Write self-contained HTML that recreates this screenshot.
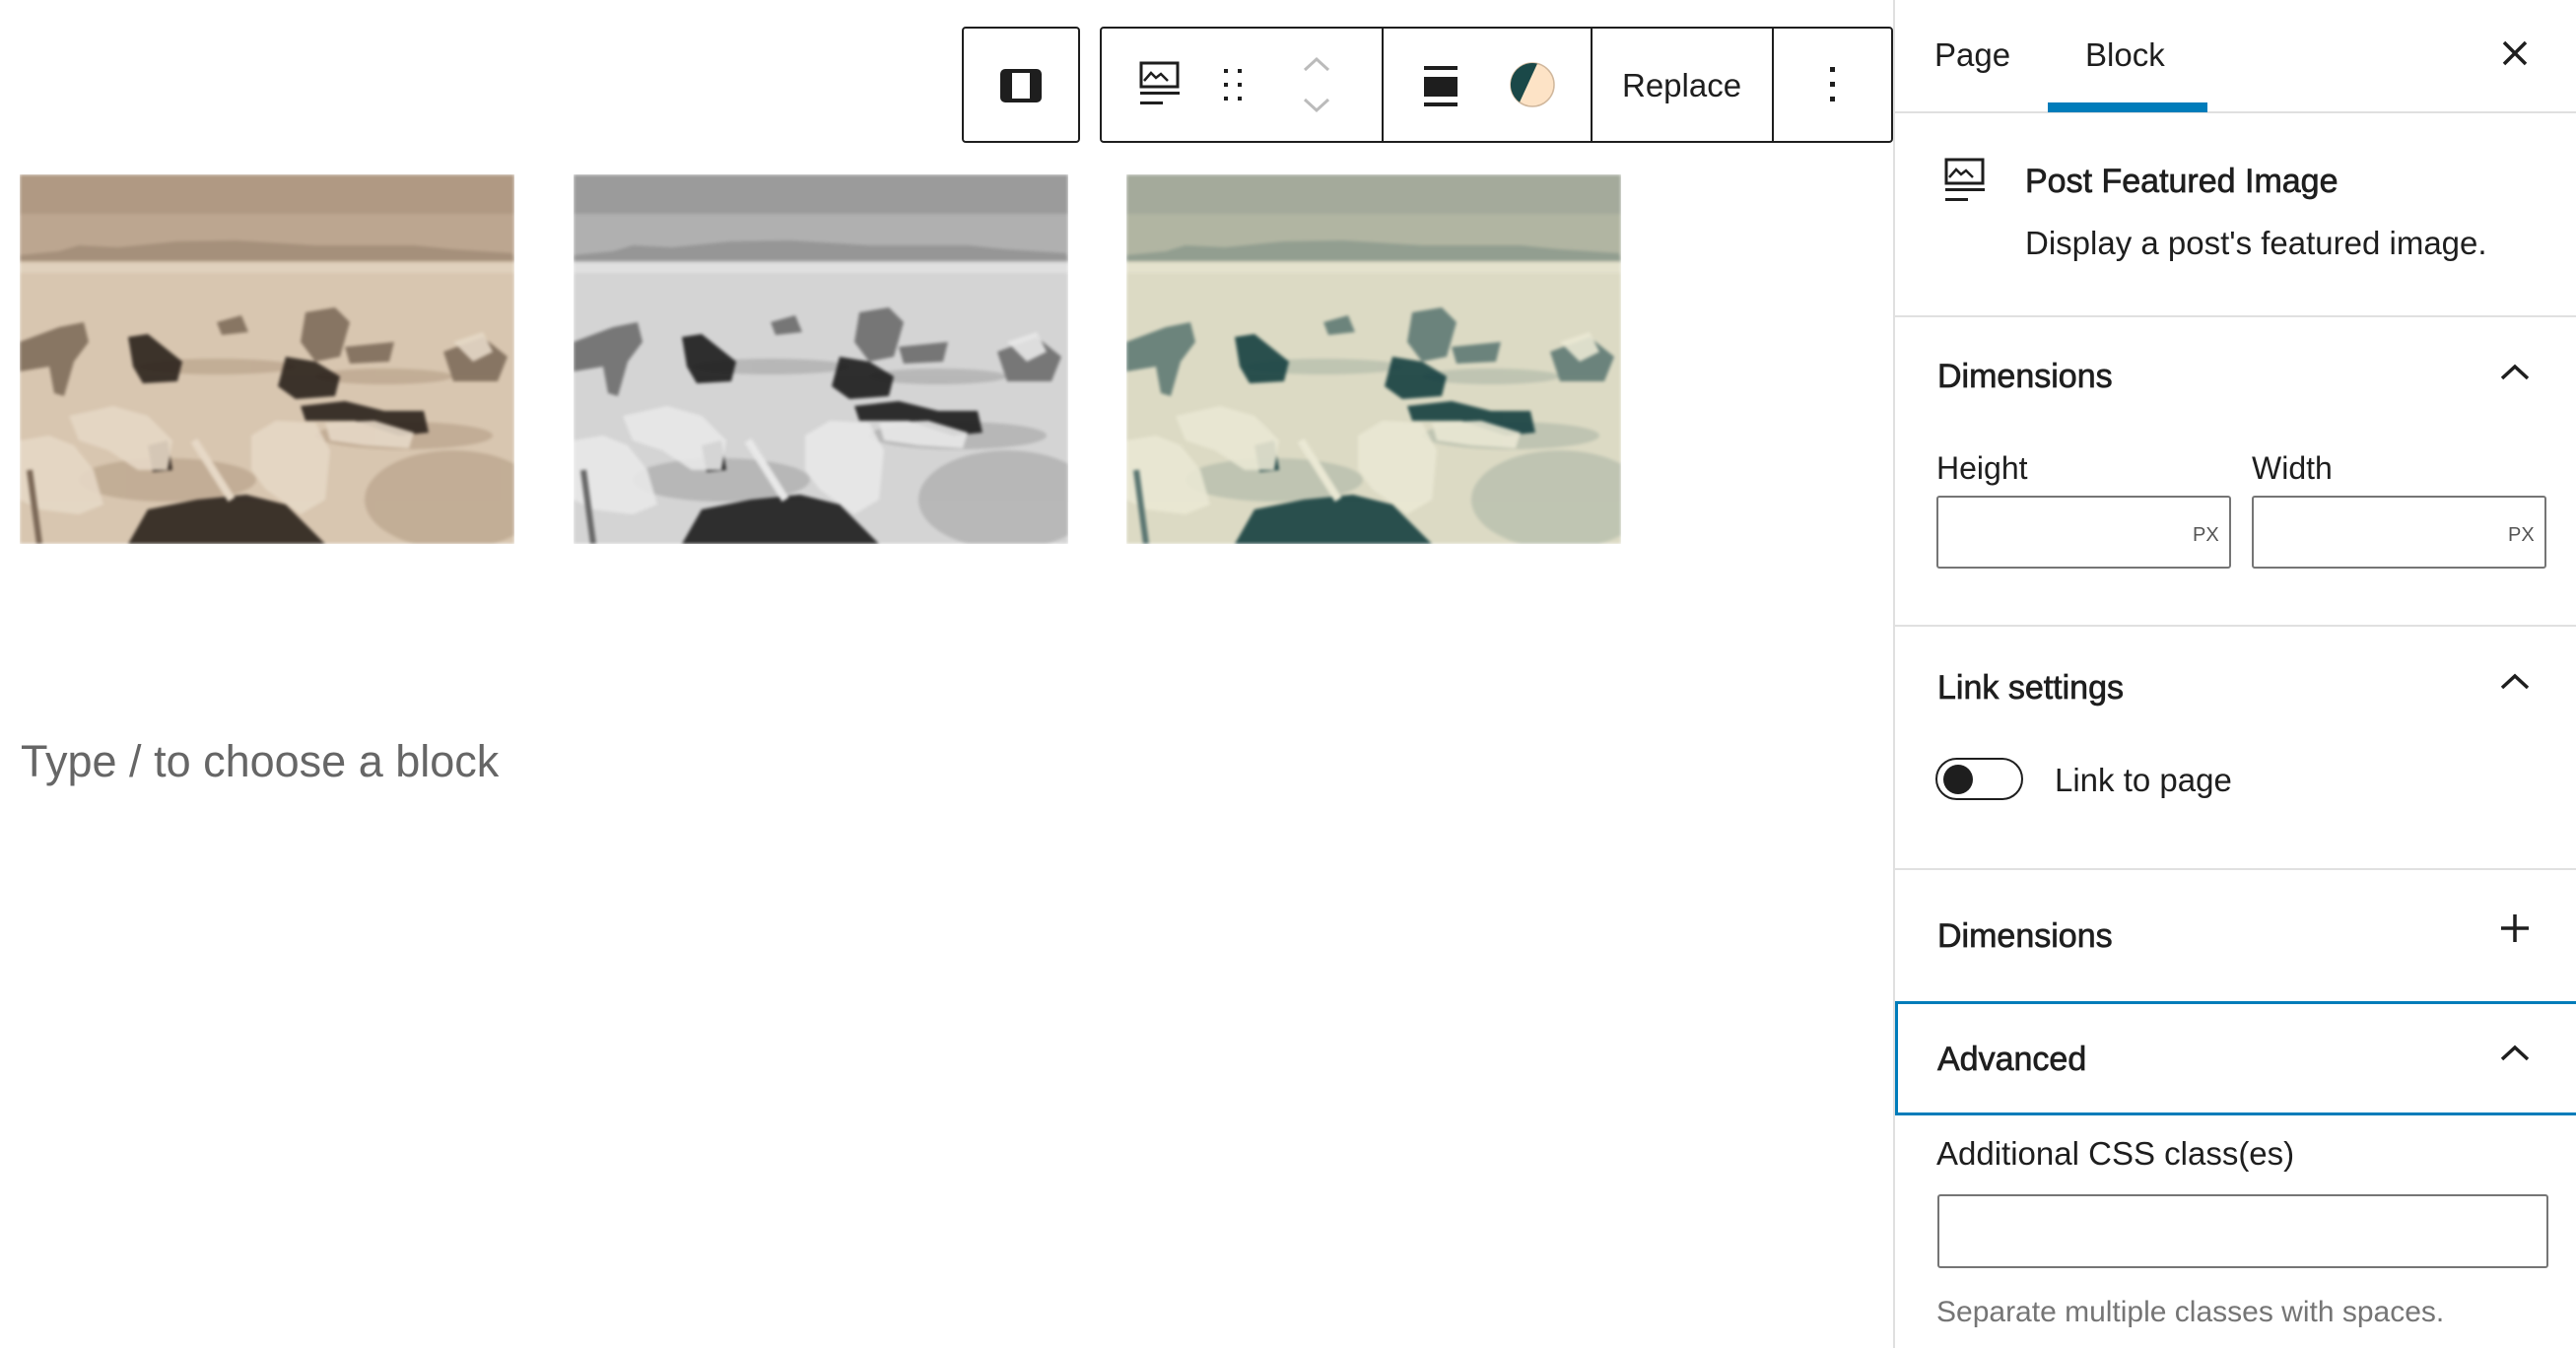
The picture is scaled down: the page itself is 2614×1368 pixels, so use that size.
<!DOCTYPE html>
<html><head><meta charset="utf-8"><style>
*{margin:0;padding:0;box-sizing:border-box}
body{width:2614px;height:1368px;background:#fff;position:relative;overflow:hidden;font-family:"Liberation Sans",sans-serif;color:#1e1e1e}
.a{position:absolute;white-space:nowrap;line-height:1}
.h{font-size:34px;-webkit-text-stroke:0.7px #1e1e1e}
.sep{position:absolute;left:1922px;width:692px;height:2px;background:#e0e0e0}
.imgw{position:absolute;top:177px;width:502px;height:375px;overflow:hidden}
.imgw svg{width:502px;height:375px;display:block;filter:blur(1.5px)}
.s1{--sk1:#a8917c;--sk2:#bca690;--sn:#d8c6b0;--sh:#bda890;--dk:#2b221c;--md:#7a6756;--lt:#e6d8c6}
.s2{--sk1:#8e8e8e;--sk2:#b0b0b0;--sn:#d4d4d4;--sh:#b0b0b0;--dk:#1c1c1c;--md:#666;--lt:#e8e8e8}
.s3{--sk1:#9ba396;--sk2:#b1b5a2;--sn:#dcdac4;--sh:#b8bfae;--dk:#153f40;--md:#587470;--lt:#eae8d4}
</style></head><body>

<div style="position:absolute;left:976px;top:27px;width:120px;height:118px;border:2px solid #1e1e1e;border-radius:4px"></div>
<svg style="position:absolute;left:1014px;top:69px" width="46" height="36" viewBox="0 0 46 36"><rect x="3" y="3" width="38" height="30" rx="3" fill="none" stroke="#1e1e1e" stroke-width="4"/><rect x="3" y="3" width="10" height="30" fill="#1e1e1e"/><rect x="31" y="3" width="10" height="30" fill="#1e1e1e"/></svg>

<div style="position:absolute;left:1116px;top:27px;width:805px;height:118px;border:2px solid #1e1e1e;border-radius:4px"></div>
<div style="position:absolute;left:1402px;top:28px;width:2px;height:116px;background:#1e1e1e"></div>
<div style="position:absolute;left:1614px;top:28px;width:2px;height:116px;background:#1e1e1e"></div>
<div style="position:absolute;left:1798px;top:28px;width:2px;height:116px;background:#1e1e1e"></div>

<svg style="position:absolute;left:1155px;top:62px" width="44" height="46" viewBox="0 0 44 46"><rect x="3" y="2" width="37" height="24" fill="none" stroke="#1e1e1e" stroke-width="3"/><path d="M6 20 L13 12 L18 17 L23 13 L30 20" fill="none" stroke="#1e1e1e" stroke-width="2.5"/><rect x="2" y="31" width="40" height="3" fill="#1e1e1e"/><rect x="2" y="41" width="23" height="3" fill="#1e1e1e"/></svg>
<svg style="position:absolute;left:1240px;top:68px" width="24" height="36" viewBox="0 0 24 36"><g fill="#1e1e1e"><rect x="2" y="2" width="4" height="4"/><rect x="16" y="2" width="4" height="4"/><rect x="2" y="16" width="4" height="4"/><rect x="16" y="16" width="4" height="4"/><rect x="2" y="30" width="4" height="4"/><rect x="16" y="30" width="4" height="4"/></g></svg>
<svg style="position:absolute;left:1318px;top:55px" width="36" height="62" viewBox="0 0 36 62"><path d="M6 16 L18 5 L30 16" fill="none" stroke="#bbb" stroke-width="3"/><path d="M6 46 L18 57 L30 46" fill="none" stroke="#bbb" stroke-width="3"/></svg>
<svg style="position:absolute;left:1443px;top:64px" width="38" height="44" viewBox="0 0 38 44"><rect x="2" y="3" width="34" height="4" fill="#1e1e1e"/><rect x="2" y="14" width="34" height="20" fill="#1e1e1e"/><rect x="2" y="40" width="34" height="4" fill="#1e1e1e"/></svg>
<svg style="position:absolute;left:1530px;top:61px" width="50" height="50" viewBox="0 0 50 50"><circle cx="25" cy="25" r="22" fill="#fde3c6" stroke="#d0b79c" stroke-width="1.5"/><path d="M30 3.6 A22 22 0 0 0 12 42.8 Z" fill="#1a4848"/></svg>
<div class="a" style="left:1646px;top:70px;font-size:33px">Replace</div>
<svg style="position:absolute;left:1854px;top:64px" width="12" height="44" viewBox="0 0 12 44"><g fill="#1e1e1e"><rect x="3" y="4" width="5" height="5"/><rect x="3" y="19" width="5" height="5"/><rect x="3" y="34" width="5" height="5"/></g></svg>

<div class="imgw s1" style="left:20px"><svg viewBox="0 0 502 375" preserveAspectRatio="none"><use href="#scene"/></svg></div>
<div class="imgw s2" style="left:582px"><svg viewBox="0 0 502 375" preserveAspectRatio="none"><use href="#scene"/></svg></div>
<div class="imgw s3" style="left:1143px"><svg viewBox="0 0 502 375" preserveAspectRatio="none"><use href="#scene"/></svg></div>

<svg width="0" height="0" style="position:absolute"><defs>
<g id="scene">
<rect width="502" height="375" style="fill:var(--sn)"/>
<rect width="502" height="88" style="fill:var(--sk2)"/>
<rect width="502" height="40" style="fill:var(--sk1)" opacity=".6"/>
<path d="M0 82 L40 78 L60 72 L100 74 L160 68 L220 67 L300 72 L400 72 L440 76 L500 80 L502 88 L0 88Z" style="fill:var(--md)" opacity=".35"/>
<rect y="90" width="502" height="10" style="fill:var(--lt)" opacity=".6"/>
<g style="fill:var(--sh)" opacity=".8">
<ellipse cx="440" cy="330" rx="90" ry="50"/>
<ellipse cx="200" cy="195" rx="80" ry="8"/>
<ellipse cx="370" cy="205" rx="70" ry="8"/>
<ellipse cx="390" cy="265" rx="90" ry="14"/>
<ellipse cx="150" cy="310" rx="90" ry="22"/>
</g>
<g style="fill:var(--md)" opacity=".85">
<path d="M0 170 L40 155 L65 150 L70 170 L55 190 L45 225 L35 222 L30 195 L0 200Z"/>
<path d="M290 140 L320 135 L335 150 L325 185 L300 190 L285 170Z"/>
<path d="M200 150 L225 143 L232 160 L205 163Z"/>
<path d="M330 175 L380 170 L375 190 L335 192Z"/>
<path d="M430 180 L470 165 L495 185 L485 210 L440 210Z"/>
</g>
<g style="fill:var(--dk)" opacity=".9">
<path d="M110 165 L130 162 L165 190 L160 210 L125 212 L115 195Z"/>
<path d="M270 185 L300 190 L325 205 L320 225 L280 228 L262 215Z"/>
<path d="M285 235 L330 230 L370 240 L410 240 L415 262 L385 265 L340 250 L290 250Z"/>
<path d="M110 375 L130 340 L180 330 L230 325 L270 335 L310 375Z"/>
<path d="M130 275 L150 270 L155 300 L135 302Z"/>
</g>
<g style="fill:var(--lt)" opacity=".9">
<path d="M0 270 L30 265 L55 275 L75 300 L85 335 L60 345 L20 340 L0 330Z"/>
<path d="M50 245 L95 235 L130 245 L155 270 L150 300 L120 300 L90 280 L60 270Z"/>
<path d="M235 265 L260 250 L300 252 L315 280 L310 330 L285 345 L250 320 L235 300Z"/>
<path d="M310 252 L360 250 L400 262 L395 278 L350 275 L315 270Z"/>
<path d="M440 170 L470 160 L480 180 L460 190Z"/>
</g>
<path d="M177 270 L215 330" style="stroke:var(--lt)" stroke-width="8"/>
<path d="M10 300 L20 375" style="stroke:var(--md)" stroke-width="6"/>
</g></defs></svg>

<div class="a" style="left:21px;top:750px;font-size:45px;color:#666">Type / to choose a block</div>

<div style="position:absolute;left:1921px;top:0;width:2px;height:1368px;background:#e0e0e0"></div>
<div class="a" style="left:1963px;top:39px;font-size:33px">Page</div>
<div class="a" style="left:2116px;top:39px;font-size:33px">Block</div>
<svg style="position:absolute;left:2538px;top:40px" width="28" height="28" viewBox="0 0 28 28"><path d="M3 3 L25 25 M25 3 L3 25" stroke="#1e1e1e" stroke-width="3.5"/></svg>
<div class="sep" style="top:113px"></div>
<div style="position:absolute;left:2078px;top:104px;width:162px;height:10px;background:#007cba"></div>

<svg style="position:absolute;left:1972px;top:160px" width="44" height="46" viewBox="0 0 44 46"><rect x="3" y="2" width="37" height="24" fill="none" stroke="#1e1e1e" stroke-width="3"/><path d="M6 20 L13 12 L18 17 L23 13 L30 20" fill="none" stroke="#1e1e1e" stroke-width="2.5"/><rect x="2" y="31" width="40" height="3" fill="#1e1e1e"/><rect x="2" y="41" width="23" height="3" fill="#1e1e1e"/></svg>
<div class="a h" style="left:2055px;top:167px">Post Featured Image</div>
<div class="a" style="left:2055px;top:230px;font-size:33px">Display a post's featured image.</div>
<div class="sep" style="top:320px"></div>

<div class="a h" style="left:1966px;top:365px">Dimensions</div>
<svg style="position:absolute;left:2536px;top:368px" width="32" height="20" viewBox="0 0 32 20"><path d="M3 16 L16 4 L29 16" fill="none" stroke="#1e1e1e" stroke-width="3.5"/></svg>
<div class="a" style="left:1965px;top:459px;font-size:32px">Height</div>
<div class="a" style="left:2285px;top:459px;font-size:32px">Width</div>
<div style="position:absolute;left:1965px;top:503px;width:299px;height:74px;border:2px solid #757575;border-radius:3px"></div>
<div style="position:absolute;left:2285px;top:503px;width:299px;height:74px;border:2px solid #757575;border-radius:3px"></div>
<div class="a" style="left:2225px;top:533px;font-size:20px;color:#555">PX</div>
<div class="a" style="left:2545px;top:533px;font-size:20px;color:#555">PX</div>
<div class="sep" style="top:634px"></div>

<div class="a h" style="left:1966px;top:681px">Link settings</div>
<svg style="position:absolute;left:2536px;top:682px" width="32" height="20" viewBox="0 0 32 20"><path d="M3 16 L16 4 L29 16" fill="none" stroke="#1e1e1e" stroke-width="3.5"/></svg>
<div style="position:absolute;left:1964px;top:769px;width:89px;height:43px;border:2px solid #1e1e1e;border-radius:22px"></div>
<div style="position:absolute;left:1972px;top:776px;width:30px;height:30px;border-radius:50%;background:#1e1e1e"></div>
<div class="a" style="left:2085px;top:775px;font-size:33px">Link to page</div>
<div class="sep" style="top:881px"></div>

<div class="a h" style="left:1966px;top:933px">Dimensions</div>
<svg style="position:absolute;left:2536px;top:926px" width="32" height="32" viewBox="0 0 32 32"><path d="M16 2 V30 M2 16 H30" stroke="#1e1e1e" stroke-width="3.5"/></svg>

<div style="position:absolute;left:1923px;top:1016px;width:691px;height:116px;border:3px solid #007cba;border-right:none"></div>
<div class="a h" style="left:1966px;top:1058px">Advanced</div>
<svg style="position:absolute;left:2536px;top:1059px" width="32" height="20" viewBox="0 0 32 20"><path d="M3 16 L16 4 L29 16" fill="none" stroke="#1e1e1e" stroke-width="3.5"/></svg>
<div class="a" style="left:1965px;top:1154px;font-size:33px">Additional CSS class(es)</div>
<div style="position:absolute;left:1966px;top:1212px;width:620px;height:75px;border:2px solid #757575;border-radius:3px"></div>
<div class="a" style="left:1965px;top:1317px;font-size:30px;color:#757575">Separate multiple classes with spaces.</div>
</body></html>
